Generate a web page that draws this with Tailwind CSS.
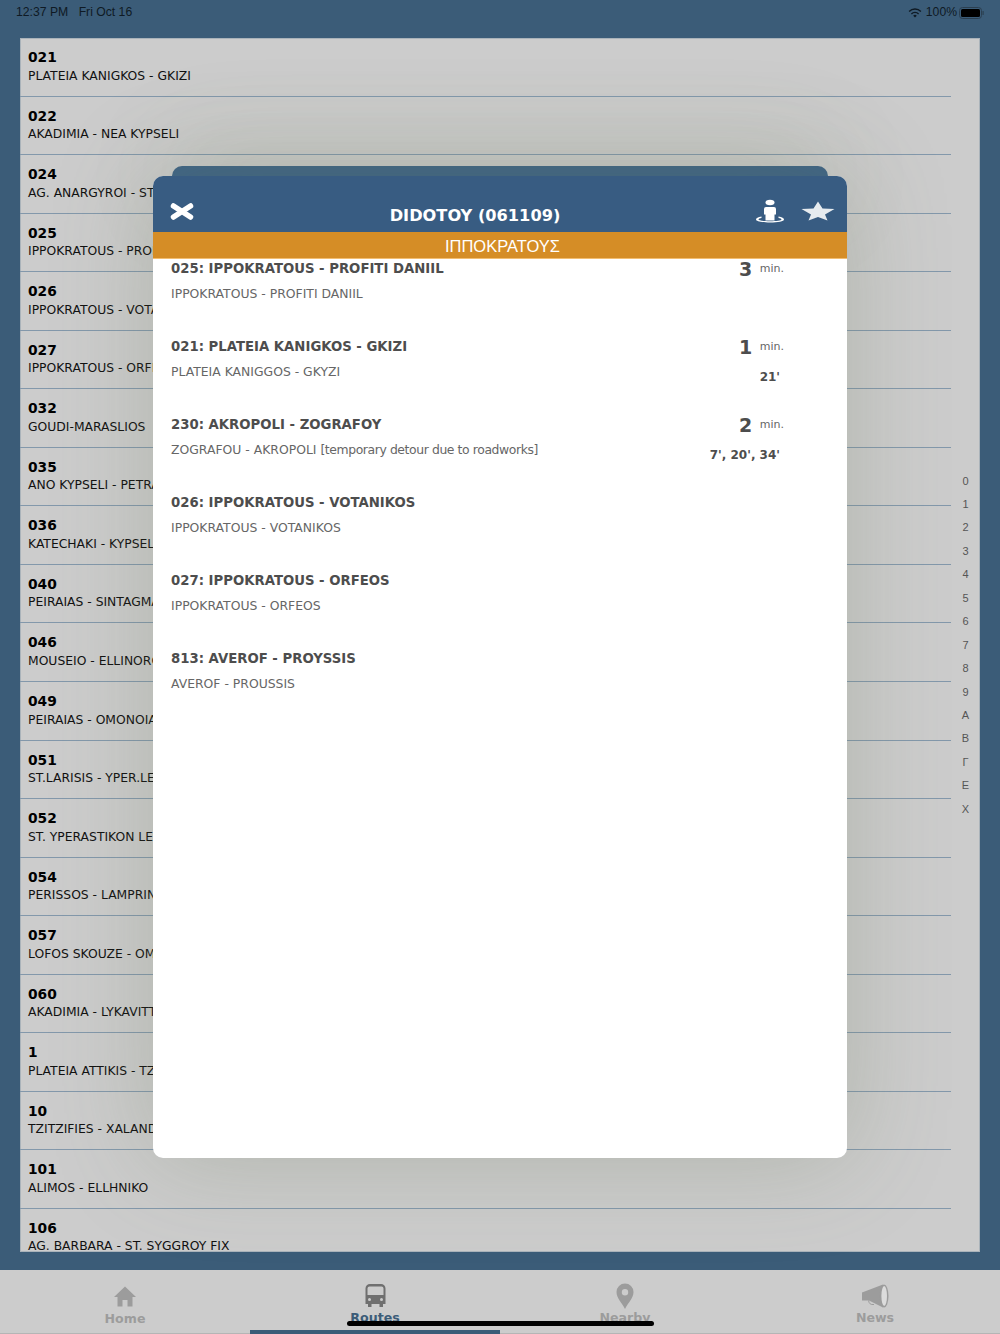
<!doctype html>
<html><head><meta charset="utf-8"><script src="https://cdn.jsdelivr.net/npm/@tailwindcss/browser@4"></script></head>
<body class="m-0">
<div class="relative w-[1000px] h-[1334px] overflow-hidden flex flex-col bg-[#3b5c78] font-['DejaVu_Sans',sans-serif]">
  <div class="h-[38px] shrink-0 flex justify-between items-start px-[16px] pt-[5px] font-['Liberation_Sans',sans-serif] text-[12.200px] leading-[15px] text-[#0f1a24]">
    <div class="flex gap-[10.500px]"><span>12:37 PM</span><span>Fri Oct 16</span></div>
    <div class="flex items-center">
      <svg class="mr-[4px]" width="14" height="11" viewBox="0 0 14 11"><path d="M7 10.600L5.200 8.700a2.600 2.600 0 0 1 3.600 0z M3.900 7.400a4.400 4.400 0 0 1 6.200 0l1-1a5.900 5.900 0 0 0-8.200 0z M1.600 5.100a7.600 7.600 0 0 1 10.800 0l1-1.100a9 9 0 0 0-12.800 0z" fill="#0f1a24"/></svg>
      <span>100%</span>
      <svg class="ml-[2px]" width="25" height="12" viewBox="0 0 25 12"><rect x=".5" y=".5" width="22" height="11" rx="3" fill="none" stroke="#2b3f50"/><rect x="2" y="2" width="19" height="8" rx="1.500" fill="#000"/><rect x="23.500" y="4" width="1.200" height="4" rx=".6" fill="#2b3f50"/></svg>
    </div>
  </div>
  <div class="mx-[20px] h-[1214px] shrink-0 bg-[#cccccc] overflow-hidden relative text-black shadow-[inset_0_0_0_1px_#aab3ba]">
    <div class="w-[931px]">
      <div class="h-[58.55px] border-b border-[#8398ab] pl-[8px] pt-[11px]"><div class="text-[13.800px] leading-[16px] font-bold">021</div><div class="text-[12.350px] leading-[15px] mt-[3.500px] text-[#111]">PLATEIA KANIGKOS - GKIZI</div></div>
      <div class="h-[58.55px] border-b border-[#8398ab] pl-[8px] pt-[11px]"><div class="text-[13.800px] leading-[16px] font-bold">022</div><div class="text-[12.350px] leading-[15px] mt-[3.500px] text-[#111]">AKADIMIA - NEA KYPSELI</div></div>
      <div class="h-[58.55px] border-b border-[#8398ab] pl-[8px] pt-[11px]"><div class="text-[13.800px] leading-[16px] font-bold">024</div><div class="text-[12.350px] leading-[15px] mt-[3.500px] text-[#111]">AG. ANARGYROI - ST. SYGGROY</div></div>
      <div class="h-[58.55px] border-b border-[#8398ab] pl-[8px] pt-[11px]"><div class="text-[13.800px] leading-[16px] font-bold">025</div><div class="text-[12.350px] leading-[15px] mt-[3.500px] text-[#111]">IPPOKRATOUS - PROFITI DANIIL</div></div>
      <div class="h-[58.55px] border-b border-[#8398ab] pl-[8px] pt-[11px]"><div class="text-[13.800px] leading-[16px] font-bold">026</div><div class="text-[12.350px] leading-[15px] mt-[3.500px] text-[#111]">IPPOKRATOUS - VOTANIKOS</div></div>
      <div class="h-[58.55px] border-b border-[#8398ab] pl-[8px] pt-[11px]"><div class="text-[13.800px] leading-[16px] font-bold">027</div><div class="text-[12.350px] leading-[15px] mt-[3.500px] text-[#111]">IPPOKRATOUS - ORFEOS</div></div>
      <div class="h-[58.55px] border-b border-[#8398ab] pl-[8px] pt-[11px]"><div class="text-[13.800px] leading-[16px] font-bold">032</div><div class="text-[12.350px] leading-[15px] mt-[3.500px] text-[#111]">GOUDI-MARASLIOS</div></div>
      <div class="h-[58.55px] border-b border-[#8398ab] pl-[8px] pt-[11px]"><div class="text-[13.800px] leading-[16px] font-bold">035</div><div class="text-[12.350px] leading-[15px] mt-[3.500px] text-[#111]">ANO KYPSELI - PETRALONA</div></div>
      <div class="h-[58.55px] border-b border-[#8398ab] pl-[8px] pt-[11px]"><div class="text-[13.800px] leading-[16px] font-bold">036</div><div class="text-[12.350px] leading-[15px] mt-[3.500px] text-[#111]">KATECHAKI - KYPSELI</div></div>
      <div class="h-[58.55px] border-b border-[#8398ab] pl-[8px] pt-[11px]"><div class="text-[13.800px] leading-[16px] font-bold">040</div><div class="text-[12.350px] leading-[15px] mt-[3.500px] text-[#111]">PEIRAIAS - SINTAGMA</div></div>
      <div class="h-[58.55px] border-b border-[#8398ab] pl-[8px] pt-[11px]"><div class="text-[13.800px] leading-[16px] font-bold">046</div><div class="text-[12.350px] leading-[15px] mt-[3.500px] text-[#111]">MOUSEIO - ELLINOROSON</div></div>
      <div class="h-[58.55px] border-b border-[#8398ab] pl-[8px] pt-[11px]"><div class="text-[13.800px] leading-[16px] font-bold">049</div><div class="text-[12.350px] leading-[15px] mt-[3.500px] text-[#111]">PEIRAIAS - OMONOIA</div></div>
      <div class="h-[58.55px] border-b border-[#8398ab] pl-[8px] pt-[11px]"><div class="text-[13.800px] leading-[16px] font-bold">051</div><div class="text-[12.350px] leading-[15px] mt-[3.500px] text-[#111]">ST.LARISIS - YPER.LEOF.</div></div>
      <div class="h-[58.55px] border-b border-[#8398ab] pl-[8px] pt-[11px]"><div class="text-[13.800px] leading-[16px] font-bold">052</div><div class="text-[12.350px] leading-[15px] mt-[3.500px] text-[#111]">ST. YPERASTIKON LEOF.</div></div>
      <div class="h-[58.55px] border-b border-[#8398ab] pl-[8px] pt-[11px]"><div class="text-[13.800px] leading-[16px] font-bold">054</div><div class="text-[12.350px] leading-[15px] mt-[3.500px] text-[#111]">PERISSOS - LAMPRINI</div></div>
      <div class="h-[58.55px] border-b border-[#8398ab] pl-[8px] pt-[11px]"><div class="text-[13.800px] leading-[16px] font-bold">057</div><div class="text-[12.350px] leading-[15px] mt-[3.500px] text-[#111]">LOFOS SKOUZE - OMONOIA</div></div>
      <div class="h-[58.55px] border-b border-[#8398ab] pl-[8px] pt-[11px]"><div class="text-[13.800px] leading-[16px] font-bold">060</div><div class="text-[12.350px] leading-[15px] mt-[3.500px] text-[#111]">AKADIMIA - LYKAVITTOS</div></div>
      <div class="h-[58.55px] border-b border-[#8398ab] pl-[8px] pt-[11px]"><div class="text-[13.800px] leading-[16px] font-bold">1</div><div class="text-[12.350px] leading-[15px] mt-[3.500px] text-[#111]">PLATEIA ATTIKIS - TZITZIFIES</div></div>
      <div class="h-[58.55px] border-b border-[#8398ab] pl-[8px] pt-[11px]"><div class="text-[13.800px] leading-[16px] font-bold">10</div><div class="text-[12.350px] leading-[15px] mt-[3.500px] text-[#111]">TZITZIFIES - XALANDRI</div></div>
      <div class="h-[58.55px] border-b border-[#8398ab] pl-[8px] pt-[11px]"><div class="text-[13.800px] leading-[16px] font-bold">101</div><div class="text-[12.350px] leading-[15px] mt-[3.500px] text-[#111]">ALIMOS - ELLHNIKO</div></div>
      <div class="h-[58.55px] pl-[8px] pt-[11px]"><div class="text-[13.800px] leading-[16px] font-bold">106</div><div class="text-[12.350px] leading-[15px] mt-[3.500px] text-[#111]">AG. BARBARA - ST. SYGGROY FIX</div></div>
    </div>
    <div class="absolute left-[930.500px] top-[431.500px] w-[30px] flex flex-col items-center font-['Liberation_Sans',sans-serif] text-[11px] leading-[23.450px] text-[#555]">
      <span>0</span><span>1</span><span>2</span><span>3</span><span>4</span><span>5</span><span>6</span><span>7</span><span>8</span><span>9</span><span>A</span><span>B</span><span>Γ</span><span>Ε</span><span>Χ</span>
    </div>
  </div>
  <div class="h-[18px] shrink-0"></div>
  <div class="relative flex-1 bg-[#cccccc] grid grid-cols-4 border-b border-[#b5b5b5]">
    <div class="flex flex-col items-center pt-[16px] text-[#9c9c9c]">
      <svg width="22" height="21" viewBox="0 0 22 21"><path d="M11 .5L0 11h3.500v9.500h5v-6.500h5v6.500h5V11H22z" fill="#9c9c9c"/></svg>
      <span class="text-[12.600px] leading-[16px] font-bold mt-[4px]">Home</span>
    </div>
    <div class="flex flex-col items-center pt-[14px] text-[#3b5c78]">
      <svg width="21" height="23" viewBox="0 0 21 23"><path fill-rule="evenodd" d="M5 0h11a4.500 4.500 0 0 1 4.500 4.500V20H18v3h-3.500v-3h-8v3H3v-3H.5V4.500A4.500 4.500 0 0 1 5 0zM4.500 2.500A2 2 0 0 0 2.500 4.500V11h16V4.500a2 2 0 0 0-2-2z" fill="#6f6f6f"/><circle cx="4.500" cy="15.500" r="1.500" fill="#cccccc"/><circle cx="16.500" cy="15.500" r="1.500" fill="#cccccc"/></svg>
      <span class="text-[12.600px] leading-[16px] font-bold mt-[3px]">Routes</span>
    </div>
    <div class="flex flex-col items-center pt-[13px] text-[#9c9c9c]">
      <svg width="18" height="27" viewBox="0 0 18 27"><path fill-rule="evenodd" d="M9 .5a8.500 8.500 0 0 1 8.500 8.500c0 6-5 10-8.500 17C5.500 19 .5 15 .5 9A8.500 8.500 0 0 1 9 .5zm0 5.500a3.200 3.200 0 1 0 0 6.400 3.200 3.200 0 0 0 0-6.400z" fill="#9c9c9c"/></svg>
      <span class="text-[12.600px] leading-[16px] font-bold mt-[0px]">Nearby</span>
    </div>
    <div class="flex flex-col items-center pt-[14px] text-[#9c9c9c]">
      <svg width="28" height="24" viewBox="0 0 28 24"><path d="M1 8.500L22 .5v23L8 16.500H1z" fill="#9c9c9c"/><path d="M7.500 16.500c.5 3 2 4.500 5.500 4" fill="none" stroke="#9c9c9c" stroke-width="1"/><ellipse cx="23" cy="12" rx="4.500" ry="11.500" fill="#9c9c9c"/><ellipse cx="23.200" cy="12" rx="2.800" ry="10" fill="#dcdcdc"/></svg>
      <span class="text-[12.600px] leading-[16px] font-bold mt-[2px]">News</span>
    </div>
    <div class="absolute left-[250px] bottom-[-1px] w-[250px] h-[4px] bg-[#3b5c78]"></div>
    <div class="absolute left-[347px] bottom-[7px] w-[307px] h-[5.500px] rounded-full bg-black"></div>
  </div>

  <div class="absolute left-[172px] top-[166px] w-[656px] h-[40px] rounded-t-[10px] bg-[#3f6485] shadow-[0_-10px_100px_rgba(100,115,80,0.18)]"></div>
  <div class="absolute left-[153px] top-[176px] w-[694px] h-[982px] rounded-[10px] overflow-hidden bg-white shadow-[0_0_100px_rgba(100,115,80,0.27)] flex flex-col">
    <div class="h-[56px] shrink-0 bg-[#385c82] relative text-white">
      <svg class="absolute left-[17px] top-[27px]" width="24" height="17" viewBox="0 0 24 17"><path d="M3.500 3L20.500 14M20.500 3L3.500 14" fill="none" stroke="#fff" stroke-width="5.500" stroke-linecap="round"/></svg>
      <div class="absolute left-[0px] w-[644px] top-[30px] text-center text-[16.200px] leading-[19px] font-bold">DIDOTOY (061109)</div>
      <svg class="absolute left-[601.500px] top-[23px]" width="30" height="25" viewBox="0 0 30 25"><ellipse cx="15" cy="3.500" rx="4.500" ry="2.800" fill="#fff"/><path d="M9 10a2 2 0 0 1 2-2h8a2 2 0 0 1 2 2v5.500h-1.500v6h-9v-6H9z" fill="#fff"/><path d="M6.500 17.500C3 18.200 1 19 1 20.500c0 1.800 6 3 14 3s14-1.200 14-3c0-1.500-2-2.300-5.500-3v1.600c1.800.3 3 .8 3 1.400 0 .9-5 1.700-11.500 1.700S3.500 21.400 3.500 20.500c0-.6 1.200-1.100 3-1.400z" fill="#fff"/></svg>
      <svg class="absolute left-[648px] top-[25px]" width="34" height="20" viewBox="0 0 34 20"><path d="M17 .5l4.500 7 12 .5-9.500 5.500 2.500 6-9.500-3.500-9.500 3.500 2.500-6L.5 8l12-.5z" fill="#e6ebef"/></svg>
    </div>
    <div class="h-[27px] shrink-0 bg-[#d58d26] border-b border-[#f2bd70] text-center text-white font-['Liberation_Sans',sans-serif] text-[16.500px] leading-[28px] pl-[5px]">ΙΠΠΟΚΡΑΤΟΥΣ</div>
    <div class="flex flex-col pt-[1px]">
      <div class="h-[78px] flex justify-between pl-[18px] pr-[63px]">
        <div><div class="text-[13.250px] leading-[18px] font-bold text-[#4d4d4d]">025: IPPOKRATOUS - PROFITI DANIIL</div><div class="text-[12.400px] leading-[16px] mt-[8px] text-[#666]">IPPOKRATOUS - PROFITI DANIIL</div></div>
        <div class="flex flex-col items-end"><div class="flex items-center gap-[7.500px] h-[18px]"><span class="text-[19px] font-bold text-[#4d4d4d]">3</span><span class="text-[11px] text-[#666]">min.</span></div></div>
      </div>
      <div class="h-[78px] flex justify-between pl-[18px] pr-[63px]">
        <div><div class="text-[13.250px] leading-[18px] font-bold text-[#4d4d4d]">021: PLATEIA KANIGKOS - GKIZI</div><div class="text-[12.400px] leading-[16px] mt-[8px] text-[#666]">PLATEIA KANIGGOS - GKYZI</div></div>
        <div class="flex flex-col items-end"><div class="flex items-center gap-[7.500px] h-[18px]"><span class="text-[19px] font-bold text-[#4d4d4d]">1</span><span class="text-[11px] text-[#666]">min.</span></div><div class="text-[12px] leading-[16px] font-bold text-[#4d4d4d] mt-[13px] pr-[4px]">21'</div></div>
      </div>
      <div class="h-[78px] flex justify-between pl-[18px] pr-[63px]">
        <div><div class="text-[13.250px] leading-[18px] font-bold text-[#4d4d4d]">230: AKROPOLI - ZOGRAFOY</div><div class="text-[12.400px] leading-[16px] mt-[8px] text-[#666]">ZOGRAFOU - AKROPOLI <span class="tracking-[-0.4px]">[temporary detour due to roadworks]</span></div></div>
        <div class="flex flex-col items-end"><div class="flex items-center gap-[7.500px] h-[18px]"><span class="text-[19px] font-bold text-[#4d4d4d]">2</span><span class="text-[11px] text-[#666]">min.</span></div><div class="text-[12px] leading-[16px] font-bold text-[#4d4d4d] mt-[13px] pr-[4px]">7', 20', 34'</div></div>
      </div>
      <div class="h-[78px] pl-[18px]"><div class="text-[13.250px] leading-[18px] font-bold text-[#4d4d4d]">026: IPPOKRATOUS - VOTANIKOS</div><div class="text-[12.400px] leading-[16px] mt-[8px] text-[#666]">IPPOKRATOUS - VOTANIKOS</div></div>
      <div class="h-[78px] pl-[18px]"><div class="text-[13.250px] leading-[18px] font-bold text-[#4d4d4d]">027: IPPOKRATOUS - ORFEOS</div><div class="text-[12.400px] leading-[16px] mt-[8px] text-[#666]">IPPOKRATOUS - ORFEOS</div></div>
      <div class="h-[78px] pl-[18px]"><div class="text-[13.250px] leading-[18px] font-bold text-[#4d4d4d]">813: AVEROF - PROYSSIS</div><div class="text-[12.400px] leading-[16px] mt-[8px] text-[#666]">AVEROF - PROUSSIS</div></div>
    </div>
  </div>
</div>
</body></html>
